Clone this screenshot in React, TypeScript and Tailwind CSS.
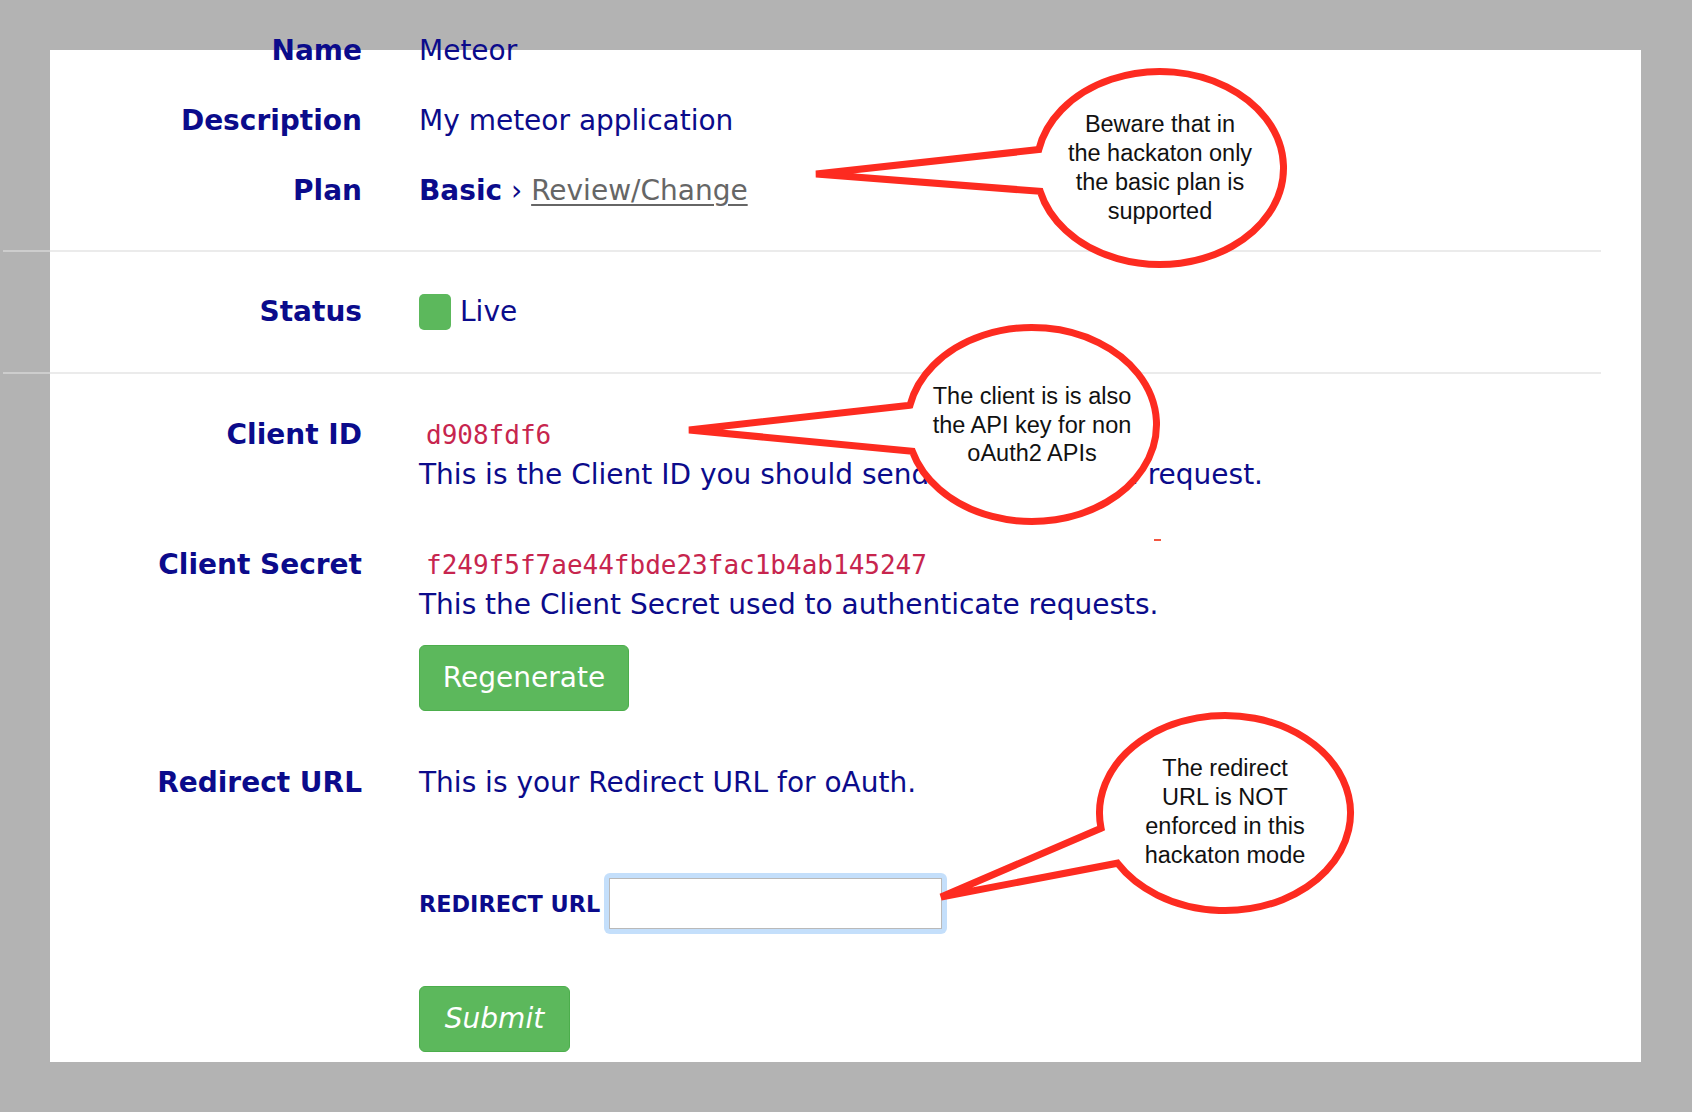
import React from 'react'

const navy = 'text-[#0b0b8b]'

const bubblePath = (cx: number, cy: number, rx: number, ry: number, tx: number, ty: number, a1: number, a2: number) => {
    const p = (a: number) => [cx + rx * Math.cos((a * Math.PI) / 180), cy + ry * Math.sin((a * Math.PI) / 180)]
    const [x1, y1] = p(a1)
    const [x2, y2] = p(a2)
    return `M${x1} ${y1} L${tx} ${ty} L${x2} ${y2} A${rx} ${ry} 0 1 0 ${x1} ${y1} Z`
}

const Label = ({ children }: { children: React.ReactNode }) => (
    <div className={`w-[359px] shrink-0 text-right font-bold ${navy}`}>{children}</div>
)

const Code = ({ children }: { children: React.ReactNode }) => (
    <div className="h-[32px] pl-[7px] font-['DejaVu_Sans_Mono',monospace] text-[26px] leading-[32px] text-[#c7254e]">{children}</div>
)

const App = () => {
    return (
        <div className="relative h-[1112px] w-[1692px] overflow-hidden bg-[#b3b3b3] pl-[50px] pt-[50px] font-['DejaVu_Sans',sans-serif] text-[28px] leading-[32px]">
            <div className="flow-root h-[1012px] w-[1591px] bg-white">
                <div className="-ml-[47px] -mt-[15px] flex w-[1598px] flex-col">
                    <div className="flex h-[32px]">
                        <Label>Name</Label>
                        <div className={`ml-[57px] ${navy}`}>Meteor</div>
                    </div>
                    <div className="mt-[38px] flex h-[32px]">
                        <Label>Description</Label>
                        <div className={`ml-[57px] ${navy}`}>My meteor application</div>
                    </div>
                    <div className="mt-[38px] flex h-[32px]">
                        <Label>Plan</Label>
                        <div className={`ml-[57px] ${navy}`}>
                            <span className="font-bold">Basic</span> ›{' '}
                            <a className="text-[#666666] underline decoration-[2px] underline-offset-[4px]">Review/Change</a>
                        </div>
                    </div>

                    <div className="mt-[43px] h-[2px] w-full bg-[#dedede]/60" />

                    <div className="mt-[42px] flex h-[36px] items-center">
                        <Label>Status</Label>
                        <div className={`ml-[57px] flex items-center gap-[9px] ${navy}`}>
                            <span className="h-[36px] w-[32px] rounded-[5px] bg-[#5cb85c]" />
                            <span>Live</span>
                        </div>
                    </div>

                    <div className="mt-[42px] h-[2px] w-full bg-[#dedede]/60" />

                    <div className="mt-[45px] flex">
                        <Label>Client ID</Label>
                        <div className="ml-[57px] flex flex-col">
                            <Code>d908fdf6</Code>
                            <div className={`mt-[8px] h-[32px] ${navy}`}>
                                This is the Client ID you should send with every API request.
                            </div>
                        </div>
                    </div>

                    <div className="mt-[58px] flex">
                        <Label>Client Secret</Label>
                        <div className="ml-[57px] flex flex-col items-start">
                            <Code>f249f5f7ae44fbde23fac1b4ab145247</Code>
                            <div className={`mt-[8px] h-[32px] ${navy}`}>
                                This the Client Secret used to authenticate requests.
                            </div>
                            <button className="mt-[24px] h-[66px] w-[210px] rounded-[6px] border border-[#4cae4c] bg-[#5cb85c] text-white">
                                Regenerate
                            </button>
                        </div>
                    </div>

                    <div className="mt-[56px] flex h-[32px]">
                        <Label>Redirect URL</Label>
                        <div className={`ml-[57px] ${navy}`}>This is your Redirect URL for oAuth.</div>
                    </div>

                    <div className="mt-[74px] flex">
                        <div className="w-[359px] shrink-0" />
                        <div className="ml-[57px] flex flex-col items-start">
                            <div className="flex items-center gap-[4px]">
                                <span className={`text-[22.4px] leading-[28px] font-bold ${navy}`}>REDIRECT URL</span>
                                <div className="rounded-[6px] bg-[#c4dffb] p-[5px]">
                                    <input className="block h-[51px] w-[333px] border border-[#b9b9b9] bg-white outline-none" />
                                </div>
                            </div>
                            <button className="mt-[52px] h-[66px] w-[151px] rounded-[6px] border border-[#4cae4c] bg-[#5cb85c] italic text-white">
                                Submit
                            </button>
                        </div>
                    </div>
                </div>
            </div>

            {/* callouts drawn over the form */}
            <svg className="pointer-events-none absolute left-0 top-0" width="1692" height="1112">
                <g fill="#ffffff" stroke="#fd2b20" strokeWidth="7">
                    <path d={bubblePath(1160, 168, 123.5, 96.5, 816, 174, 191, 166)} />
                    <path d={bubblePath(1032, 424.5, 124.5, 97, 689, 430, 191.5, 164)} />
                    <path d={bubblePath(1225, 813, 125.5, 97.5, 941, 897, 171, 149)} />
                </g>
            </svg>
            <div className="absolute left-[1154px] top-[539px] h-[2px] w-[7px] bg-[#f3553f]" />

            <div className="absolute left-[1040px] top-[72px] flex h-[192px] w-[240px] items-center justify-center text-center font-['Liberation_Sans',Arial,sans-serif] text-[23.5px] leading-[29px] text-[#111111]">
                Beware that in<br />the hackaton only<br />the basic plan is<br />supported
            </div>
            <div className="absolute left-[912px] top-[329px] flex h-[192px] w-[240px] items-center justify-center text-center font-['Liberation_Sans',Arial,sans-serif] text-[23.5px] leading-[28.5px] text-[#111111]">
                The client is is also<br />the API key for non<br />oAuth2 APIs
            </div>
            <div className="absolute left-[1105px] top-[715px] flex h-[194px] w-[240px] items-center justify-center text-center font-['Liberation_Sans',Arial,sans-serif] text-[23.5px] leading-[29px] text-[#111111]">
                The redirect<br />URL is NOT<br />enforced in this<br />hackaton mode
            </div>
        </div>
    )
}

export default App
